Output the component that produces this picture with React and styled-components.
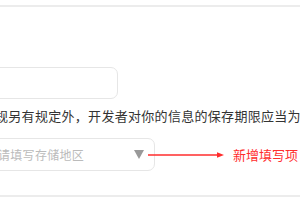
import React from 'react'
import styled, { createGlobalStyle } from 'styled-components'

const GlobalStyle = createGlobalStyle`
    html, body {
        margin: 0;
        padding: 0;
        background: #fff;
        overflow: hidden;
    }
    body {
        font-family: "Noto Sans CJK SC", "Noto Sans", sans-serif;
    }
`

const Page = styled.div`
    width: 300px;
    height: 200px;
    overflow: hidden;
    display: flex;
    flex-direction: column;
`

const Divider = styled.div`
    height: 2px;
    background-color: #ececec;
    margin-top: ${props => props.top}px;
    flex-shrink: 0;
`

const InputBox = styled.div`
    box-sizing: border-box;
    margin-left: -20px;
    margin-top: ${props => props.top}px;
    width: ${props => props.width}px;
    height: ${props => props.height}px;
    border: 1px solid #e6e6e6;
    border-radius: 7px;
    background: #fff;
    display: flex;
    align-items: center;
    justify-content: space-between;
    padding: 0 10px 0 17px;
    flex-shrink: 0;
`

const Notice = styled.p`
    margin: 7px 0 0 -5px;
    font-family: "Noto Sans CJK SC", sans-serif;
    font-size: 13px;
    letter-spacing: 0.3px;
    line-height: 20px;
    color: #333;
    white-space: nowrap;
    overflow: hidden;
    width: 305px;
`

const Row = styled.div`
    display: flex;
    align-items: center;
    margin-top: 12px;
`

const Placeholder = styled.span`
    font-size: 12px;
    letter-spacing: 0.3px;
    color: #bbb;
    white-space: nowrap;
`

const Caret = styled.svg`
    display: block;
    width: 10px;
    height: 9px;
`

const Arrow = styled.svg`
    display: block;
    width: 76px;
    height: 10px;
    margin-left: -7px;
`

const Note = styled.span`
    margin-left: 9px;
    font-size: 13px;
    color: #ff2d2d;
    white-space: nowrap;
`

function App() {
    return (
        <>
            <GlobalStyle />
            <Page>
                <Divider top={5} />
                <InputBox top={60} width={138} height={32} />
                <Notice>规另有规定外，开发者对你的信息的保存期限应当为</Notice>
                <Row>
                    <InputBox top={0} width={175} height={33}>
                        <Placeholder>请填写存储地区</Placeholder>
                        <Caret viewBox="0 0 10 9">
                            <polygon points="0,0 10,0 5,9" fill="#999" />
                        </Caret>
                    </InputBox>
                    <Arrow viewBox="0 0 76 10">
                        <line x1="0" y1="5" x2="71" y2="5" stroke="#ff2d2d" strokeWidth="1.6" />
                        <polygon points="69,2.2 76,5 69,7.8" fill="#ff2d2d" />
                    </Arrow>
                    <Note>新增填写项</Note>
                </Row>
                <Divider top={24} />
            </Page>
        </>
    )
}

export default App
